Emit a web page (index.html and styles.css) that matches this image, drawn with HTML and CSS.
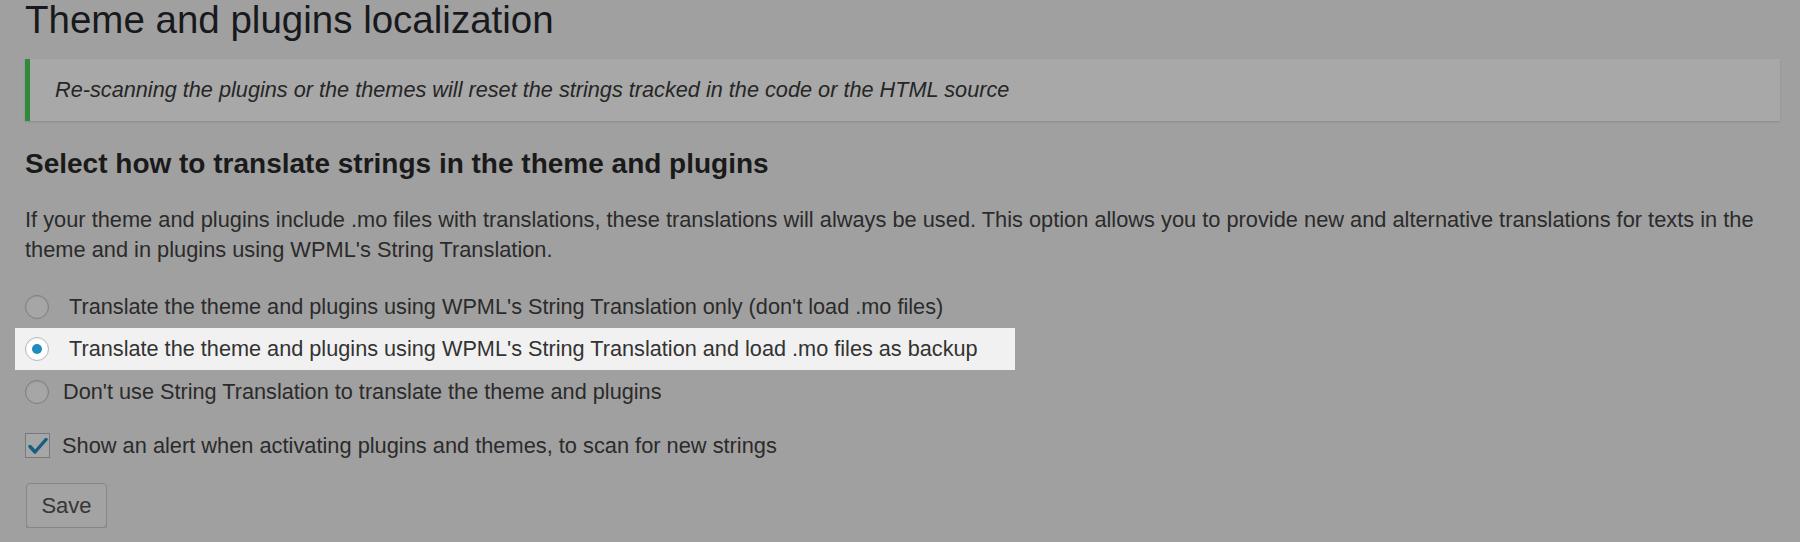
FILE: index.html
```html
<!DOCTYPE html>
<html lang="en">
<head>
    <meta charset="UTF-8">
    <title>Theme and plugins localization</title>
    <link rel="stylesheet" href="styles.css">
</head>
<body>
    <div class="wrap">
        <h1 class="page-title">Theme and plugins localization</h1>

        <div class="notice">
            <p>Re-scanning the plugins or the themes will reset the strings tracked in the code or the HTML source</p>
        </div>

        <h2 class="section-title">Select how to translate strings in the theme and plugins</h2>

        <p class="intro">If your theme and plugins include .mo files with translations, these translations will always be used. This option allows you to provide new and alternative translations for texts in the theme and in plugins using WPML's String Translation.</p>

        <ul class="options">
            <li class="option">
                <span class="radio"></span>
                <span class="label spaced">Translate the theme and plugins using WPML's String Translation only (don't load .mo files)</span>
            </li>
            <li class="option selected">
                <span class="radio checked"></span>
                <span class="label spaced">Translate the theme and plugins using WPML's String Translation and load .mo files as backup</span>
            </li>
            <li class="option">
                <span class="radio"></span>
                <span class="label">Don't use String Translation to translate the theme and plugins</span>
            </li>
        </ul>

        <div class="option check-row">
            <span class="checkbox">
                <svg width="20" height="18" viewBox="0 0 20 18"><path d="M2 9.5 L7 15 L18 2.5" fill="none" stroke="#165f82" stroke-width="3.4" stroke-linecap="round" stroke-linejoin="round"/></svg>
            </span>
            <span class="label">Show an alert when activating plugins and themes, to scan for new strings</span>
        </div>

        <button class="button">Save</button>
    </div>
</body>
</html>
```

FILE: styles.css
```css
body {
    margin: 0;
    background: #a0a0a0;
    font-family: "Liberation Sans", Arial, Helvetica, sans-serif;
    color: #2b2b2b;
}

.wrap {
    padding: 0 20px 0 25px;
}

.page-title {
    margin: 0;
    font-size: 38.5px;
    font-weight: 400;
    line-height: 40px;
    color: #17191c;
}

.notice {
    margin-top: 19px;
    width: 1755px;
    box-sizing: border-box;
    background: #a8a8a8;
    border-left: 5px solid #2f8a3c;
    box-shadow: 0 1px 2px rgba(0, 0, 0, 0.12);
    padding: 16px 0 16px 25px;
}

.notice p {
    margin: 0;
    font-size: 21.7px;
    line-height: 30px;
    font-style: italic;
    color: #262626;
}

.section-title {
    margin: 28px 0 0;
    font-size: 28px;
    line-height: 30px;
    font-weight: 700;
    color: #1a1a1a;
}

.intro {
    margin: 26px 0 0;
    font-size: 21.8px;
    line-height: 30px;
    max-width: 1760px;
}

.options {
    list-style: none;
    margin: 20px 0 0;
    padding: 0;
}

.option {
    display: flex;
    align-items: center;
    height: 43px;
    font-size: 21.8px;
}

.options .option {
    font-size: 21.7px;
}

.option.selected {
    background: #f1f1f1;
    margin-left: -10px;
    padding-left: 10px;
    width: 990px;
    height: 42px;
    color: #333;
}

.label {
    margin-left: 14px;
}

.label.spaced {
    margin-left: 20px;
}

.radio {
    width: 22px;
    height: 22px;
    flex: none;
    border: 1px solid #7b7d80;
    border-radius: 50%;
    background: #a6a6a6;
    box-shadow: inset 0 1px 2px rgba(0, 0, 0, 0.07);
    display: flex;
    align-items: center;
    justify-content: center;
}

.radio.checked {
    background: #fff;
    border-color: #b4b9be;
}

.radio.checked::after {
    content: "";
    width: 10px;
    height: 10px;
    border-radius: 50%;
    background: #1e8cbe;
}

.check-row {
    margin-top: 11px;
}

.checkbox {
    width: 23px;
    height: 23px;
    flex: none;
    border: 1px solid #777a7d;
    background: #a6a6a6;
    display: flex;
    align-items: center;
    justify-content: center;
}

.check-row .label {
    margin-left: 12px;
}

.button {
    margin-top: 16px;
    width: 81px;
    height: 45px;
    font-family: inherit;
    font-size: 22px;
    color: #363636;
    background: #a3a3a3;
    border: 1px solid #868686;
    border-radius: 4px;
    box-shadow: 0 2px 0 #8c8c8c;
    padding: 0;
    margin-left: 1px;
}
```
